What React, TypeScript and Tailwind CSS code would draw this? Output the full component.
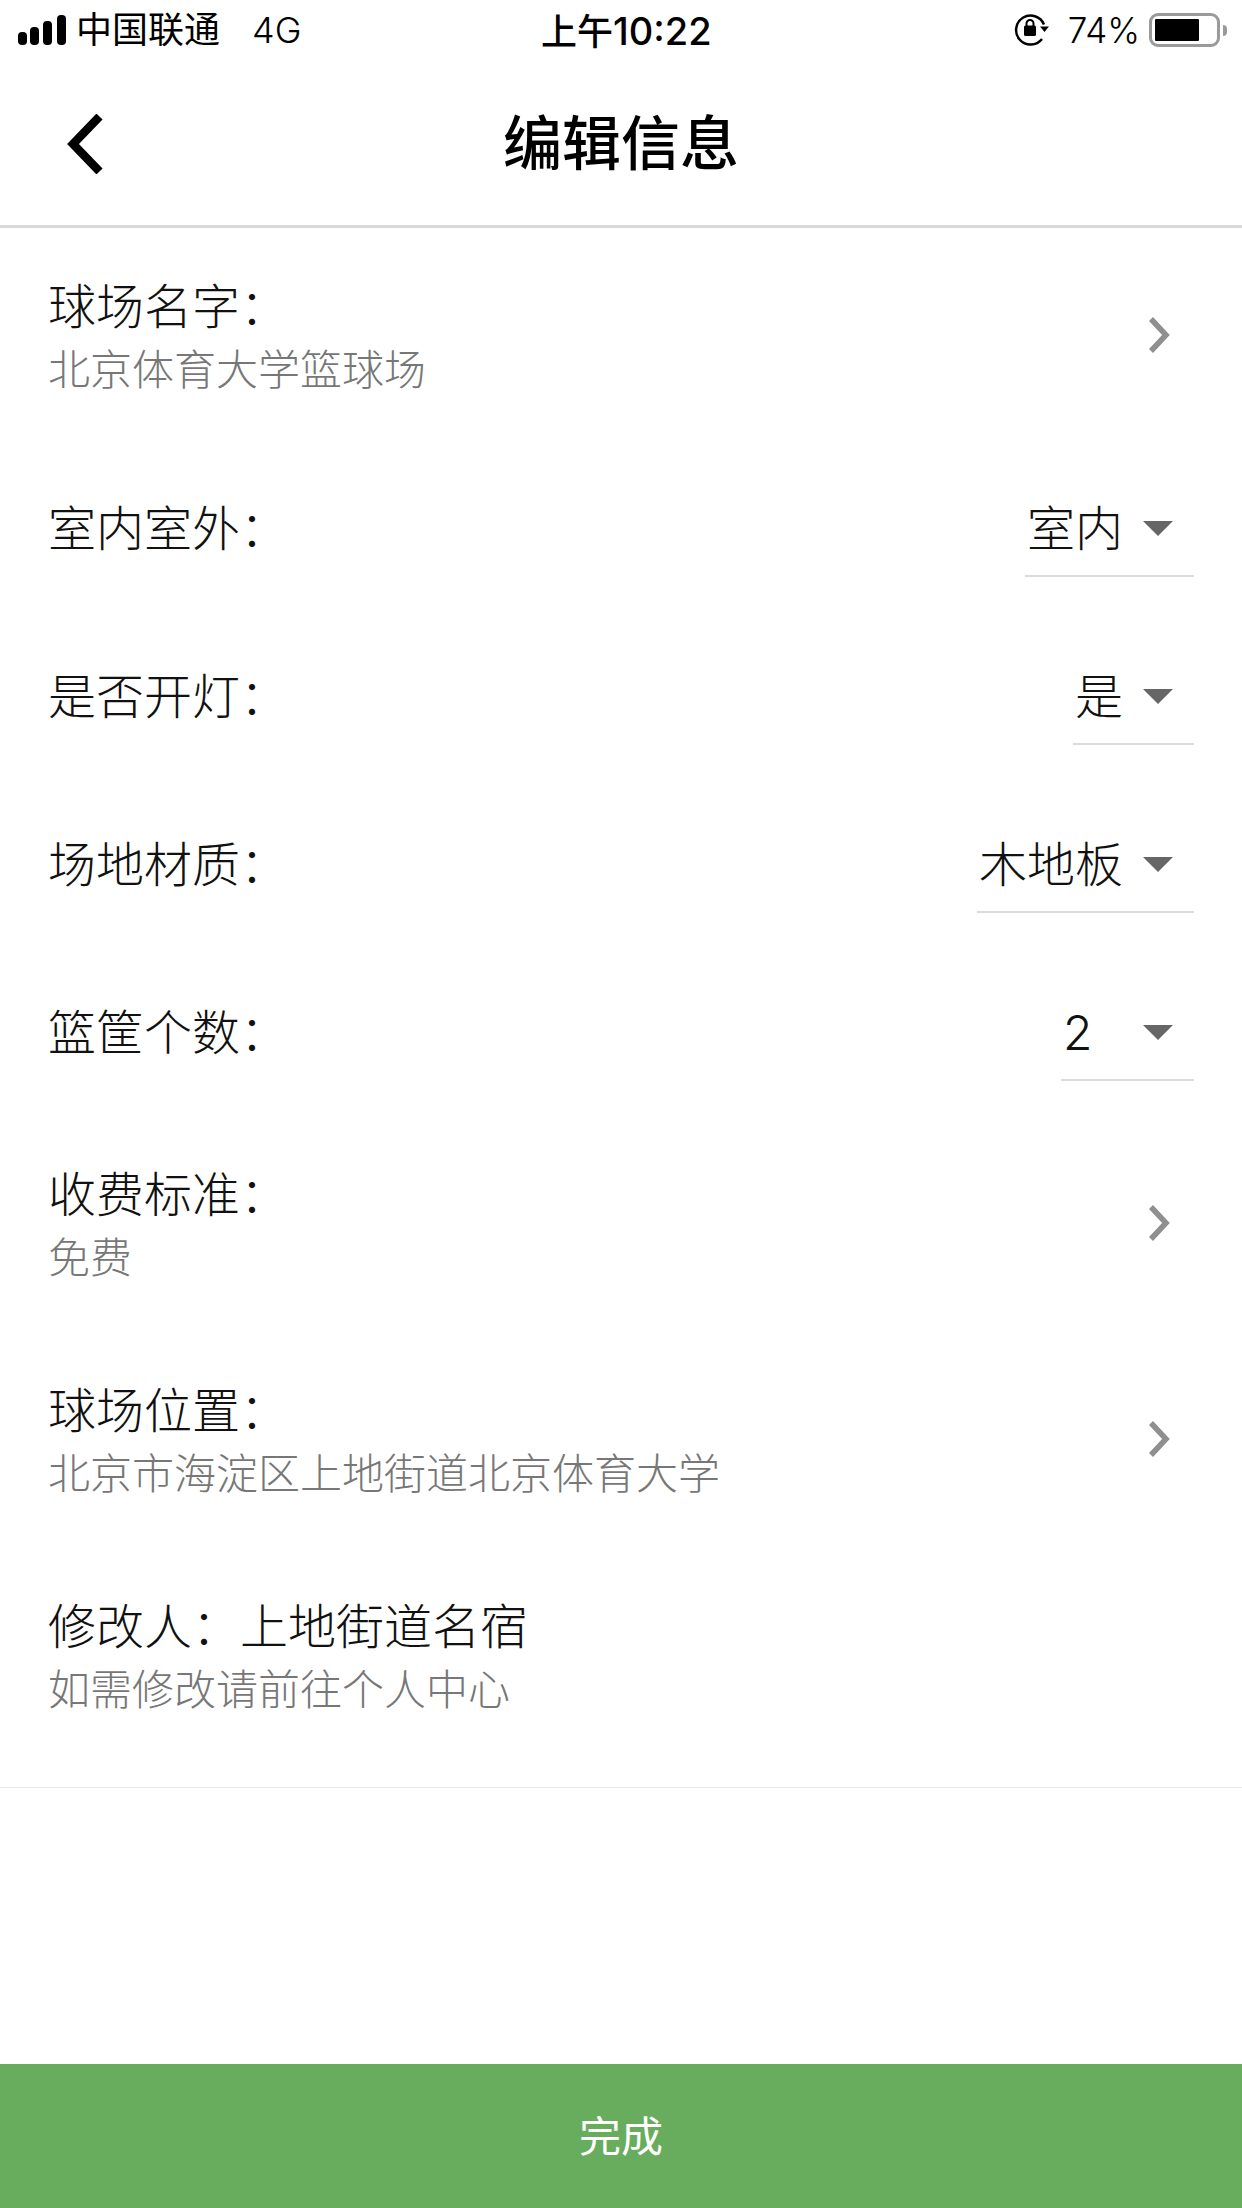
const FONT = "font-['Inter','Noto_Sans_CJK_SC',sans-serif]";

// ─── Status bar ───────────────────────────────────────────────────────────────
function StatusBar() {
  return (
    <div className="relative flex h-[62px] items-center justify-between pb-[2px] pl-[18px] pr-[15px] text-[35px] leading-none text-black">
      <div className="flex items-center">
        <svg width="48" height="30" viewBox="0 0 48 30" fill="currentColor">
          <rect x="0" y="17" width="9" height="13" rx="4" />
          <rect x="12" y="12" width="9" height="18" rx="4" />
          <rect x="25" y="6" width="9" height="24" rx="4" />
          <rect x="39" y="0" width="9" height="30" rx="4" />
        </svg>
        <span className="ml-[10px] text-[36px]">中国联通</span>
        <span className="ml-[32px] text-[36px] font-light">4G</span>
      </div>
      <span className="absolute left-[541px] top-[12px] text-[36px] font-medium">
        上午<span className="text-[38px]">10:22</span>
      </span>
      <div className="flex items-center">
        <svg width="36" height="32" viewBox="0 0 36 32" fill="none" stroke="currentColor" strokeWidth="2.500">
          <path d="M30 10.500A14.500 14.500 0 1 0 28 25" />
          <path d="M26 12.500h9L30.500 18z" fill="currentColor" stroke="none" />
          <path d="M12.500 12V9.500a3.500 3.500 0 0 1 7 0V12" strokeWidth="2" />
          <rect x="10" y="11.500" width="12" height="10.500" rx="1.500" fill="currentColor" stroke="none" />
        </svg>
        <span className="ml-[18px] font-light">74%</span>
        <div className="ml-[9px] flex h-[34px] w-[71px] items-center rounded-[9px] border-[3px] border-[#9a9a9a] p-[3px]">
          <div className="h-full w-[44px] rounded-[1px] bg-black" />
        </div>
        <div className="ml-[3px] h-[11px] w-[4px] rounded-r-full bg-[#9a9a9a]" />
      </div>
    </div>
  );
}

// ─── Rows ─────────────────────────────────────────────────────────────────────
function LinkRow({ label, sub, chevron = true }: { label: string; sub: string; chevron?: boolean }) {
  return (
    <div className="flex h-[216px] items-center justify-between pl-[48px] pr-[72px]">
      <div className="pt-[3px] font-light">
        <div className="text-[48px] leading-[63px] text-[#111]">{label}</div>
        <div className="text-[42px] leading-[63px] text-[#777]">{sub}</div>
      </div>
      {chevron && (
        <svg className="-mt-[2px]" width="22" height="36" viewBox="0 0 22 36" fill="none" stroke="#8f8f8f" strokeWidth="5.500">
          <path d="M3 2l15 16L3 34" />
        </svg>
      )}
    </div>
  );
}

function SelectRow({ label, value, wide = false }: { label: string; value: string; wide?: boolean }) {
  return (
    <div className="flex h-[168px] items-center justify-between px-[48px] font-light">
      <div className="pt-[2px] text-[48px] leading-[64px] text-[#111]">{label}</div>
      <div className={`mt-[14px] flex h-[84px] items-center gap-[20px] border-b-2 border-[#dcdcdc] pb-[11px] pl-[2px] pr-[21px] ${wide ? "w-[133px]" : ""}`}>
        <span className="text-[48px] leading-[64px] text-[#111]">{value}</span>
        <div className="ml-auto h-0 w-0 border-x-[15px] border-t-[15px] border-x-transparent border-t-[#666]" />
      </div>
    </div>
  );
}

export default function App() {
  return (
    <div className={`flex h-[2208px] w-[1242px] flex-col bg-white ${FONT}`}>
      <StatusBar />

      {/* Nav */}
      <div className="relative flex h-[166px] items-center justify-center border-b-[3px] border-[#d9d9d9]">
        <svg className="absolute left-[67px] top-[52px]" width="36" height="60" viewBox="0 0 36 60" fill="none" stroke="#000" strokeWidth="8.500">
          <path d="M32.500 2.500L6 30l26.500 27.500" />
        </svg>
        <h1 className="text-[59px] font-medium leading-none text-black">编辑信息</h1>
      </div>

      <div className="border-b border-[#e8e8e8] pb-[23px]">
        <LinkRow label="球场名字：" sub="北京体育大学篮球场" />
        <SelectRow label="室内室外：" value="室内" />
        <SelectRow label="是否开灯：" value="是" />
        <SelectRow label="场地材质：" value="木地板" />
        <SelectRow label="篮筐个数：" value="2" wide />
        <LinkRow label="收费标准：" sub="免费" />
        <LinkRow label="球场位置：" sub="北京市海淀区上地街道北京体育大学" />
        <LinkRow label="修改人：上地街道名宿" sub="如需修改请前往个人中心" chevron={false} />
      </div>

      <button className="mt-auto flex h-[144px] items-center justify-center bg-[#68ad5e] text-[42px] text-white">
        完成
      </button>
    </div>
  );
}
